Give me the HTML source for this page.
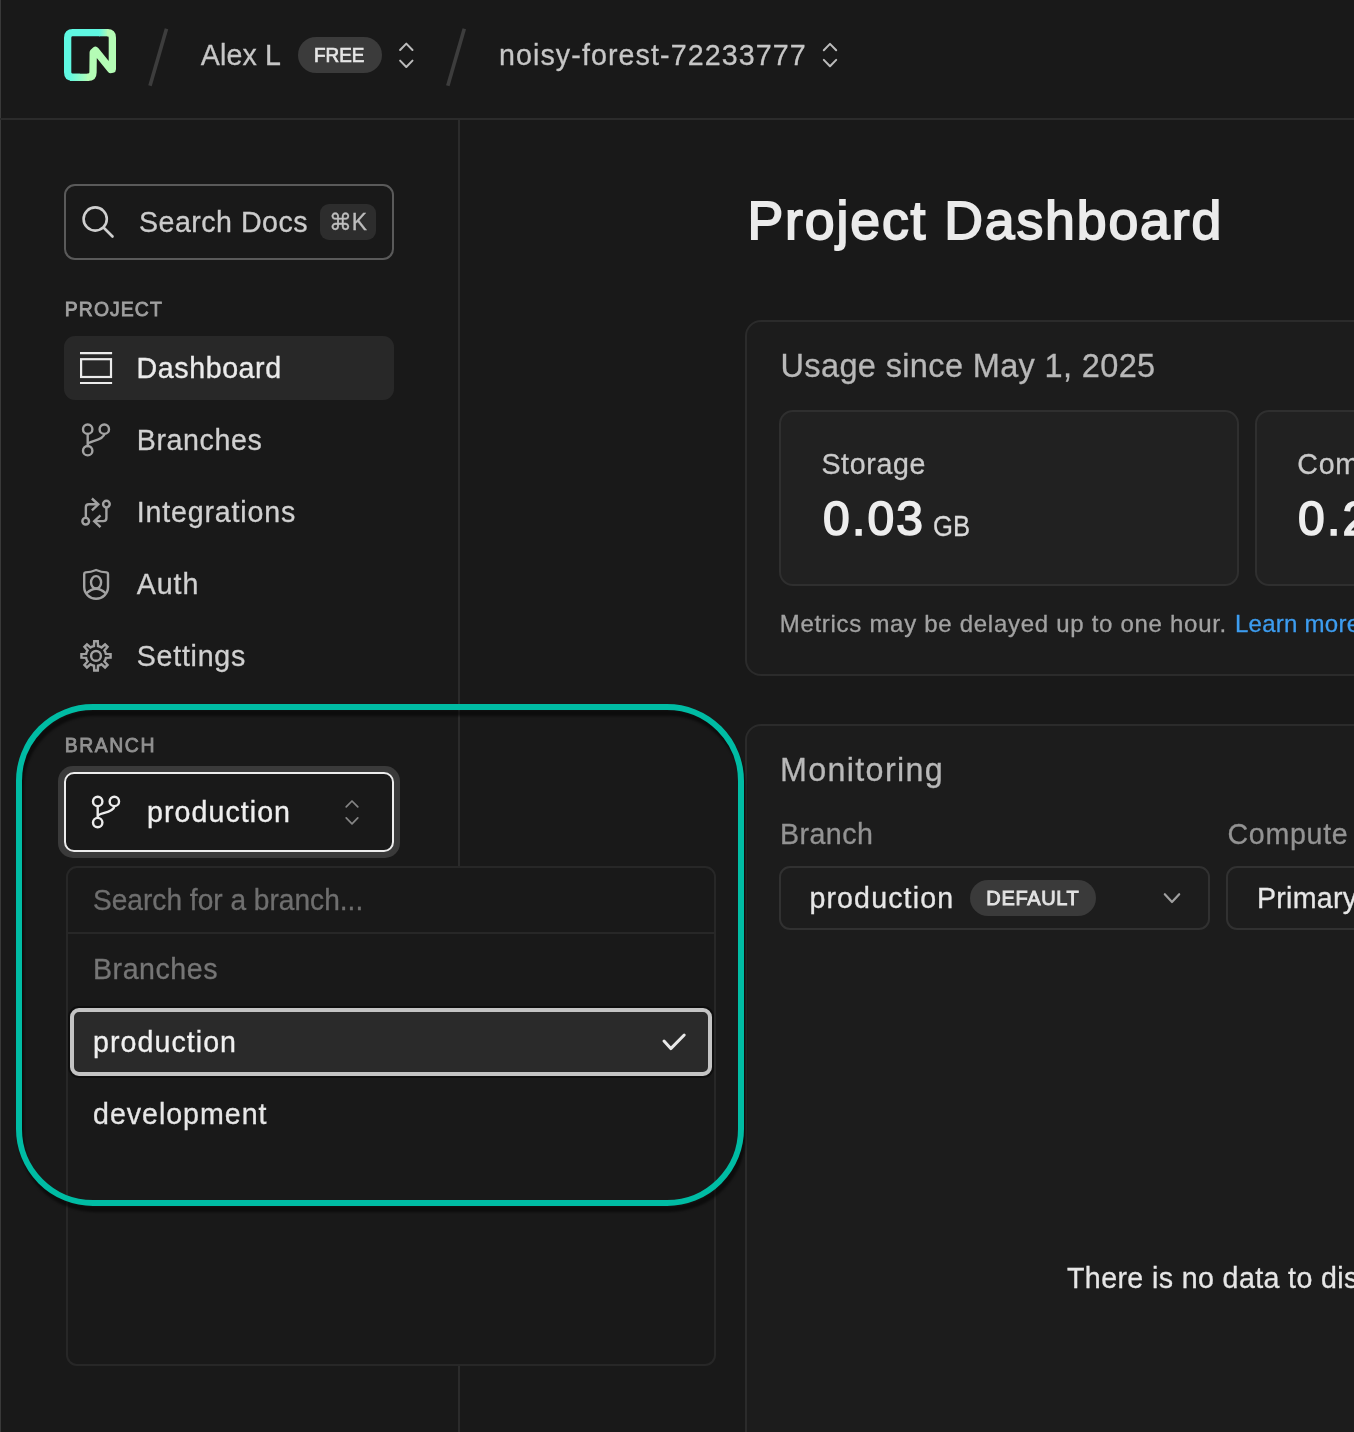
<!DOCTYPE html>
<html lang="en"><head><meta charset="utf-8"><title>Project Dashboard - Neon Console</title>
<style>
html,body{margin:0;padding:0;background:#191919;}
body{width:1354px;height:1432px;position:relative;overflow:hidden;font-family:"Liberation Sans","DejaVu Sans",sans-serif;}
.t{position:absolute;white-space:nowrap;line-height:1;-webkit-text-stroke:0.3px currentColor;}
.b{position:absolute;box-sizing:border-box;}
svg.ic{position:absolute;left:0;top:0;}
</style></head><body>
<!-- frame lines -->
<div class="b" style="left:0;top:0;width:1px;height:1432px;background:#393939"></div>
<div class="b" style="left:0;top:118px;width:1354px;height:2px;background:#2b2b2b"></div>
<div class="b" style="left:458px;top:120px;width:2px;height:1312px;background:#2b2b2b"></div>
<!-- header badge -->
<div class="b" style="left:297.6px;top:37px;width:84.6px;height:36px;border-radius:18px;background:#3b3b3b"></div>
<!-- search docs -->
<div class="b" style="left:64px;top:184px;width:330px;height:76px;border:2px solid #5a5a5a;border-radius:11px;"></div>
<div class="b" style="left:320px;top:204px;width:56px;height:36px;border-radius:9px;background:#2d2d2d"></div>
<!-- nav active -->
<div class="b" style="left:64px;top:336px;width:330px;height:64px;border-radius:11px;background:#282828"></div>
<!-- main cards -->
<div class="b" style="left:745px;top:320px;width:700px;height:356px;border:2px solid #2b2b2b;border-radius:16px;background:#1c1c1c"></div>
<div class="b" style="left:779px;top:410px;width:460px;height:176px;border:2px solid #2f2f2f;border-radius:14px;background:#212121"></div>
<div class="b" style="left:1255px;top:410px;width:460px;height:176px;border:2px solid #2f2f2f;border-radius:14px;background:#212121"></div>
<div class="b" style="left:745px;top:724px;width:700px;height:800px;border:2px solid #2b2b2b;border-radius:16px;background:#1c1c1c"></div>
<div class="b" style="left:779px;top:866px;width:431px;height:64px;border:2px solid #313131;border-radius:11px;background:#1d1d1d"></div>
<div class="b" style="left:1226px;top:866px;width:431px;height:64px;border:2px solid #313131;border-radius:11px;background:#1d1d1d"></div>
<div class="b" style="left:970.4px;top:880px;width:125.6px;height:35.6px;border-radius:18px;background:#3a3a3a"></div>
<!-- branch dropdown panel -->
<div class="b" style="left:66px;top:866px;width:650px;height:500px;border:2px solid #272727;border-radius:11px;background:#191919"></div>
<div class="b" style="left:68px;top:932px;width:646px;height:2px;background:#272727"></div>
<div class="b" style="left:68.4px;top:1006px;width:645.4px;height:72px;border-radius:11px;background:#0e0e0e"></div>
<div class="b" style="left:70.3px;top:1008px;width:641.8px;height:68px;border:4px solid #c4c4c4;border-radius:9px;background:#2a2a2a"></div>
<!-- branch select button -->
<div class="b" style="left:58px;top:766px;width:342px;height:92px;border-radius:15px;background:#3a3a3a"></div>
<div class="b" style="left:63.8px;top:772.2px;width:330.6px;height:79.8px;border:2.4px solid #ececec;border-radius:10px;background:#191919"></div>
<!-- teal highlight -->
<div class="b" style="left:16px;top:704px;width:728px;height:501.5px;border:6px solid #00bca4;border-radius:77px;filter:drop-shadow(2px 6px 1px rgba(0,0,0,.52));"></div>
<svg class="ic" width="1354" height="1432" viewBox="0 0 1354 1432">
<defs>
<linearGradient id="lgb" x1="69" y1="0" x2="89" y2="0" gradientUnits="userSpaceOnUse"><stop offset="0" stop-color="#5ff8e2"/><stop offset="1" stop-color="#b4fcb5"/></linearGradient>
<linearGradient id="lgt" x1="99" y1="0" x2="108.5" y2="0" gradientUnits="userSpaceOnUse"><stop offset="0" stop-color="#5ff8e2"/><stop offset="1" stop-color="#b4fcb5"/></linearGradient>
</defs>
<g fill="none" stroke-width="7.3" stroke-linecap="butt" stroke-linejoin="round">
<path d="M80 77.35 L72.65 77.35 Q67.65 77.35 67.65 72.35 L67.65 37.65 Q67.65 32.65 72.65 32.65 L100 32.65" stroke="#5ff8e2"/>
<path d="M99 32.65 L108.5 32.65" stroke="url(#lgt)"/>
<path d="M70 77.35 L89 77.35" stroke="url(#lgb)"/>
<path d="M107 32.65 L107.35 32.65 Q112.35 32.65 112.35 37.65 L112.35 69.2 L110.9 69.6 L95.4 50.4 L93.2 52.5 L93 72.35 Q93 77.35 88 77.35 L87 77.35" stroke="#b4fcb5"/>
</g>
<path d="M166.5 28.8 L150 85.8" stroke="#3d3d3d" stroke-width="3.6" stroke-linecap="butt"/>
<path d="M464.3 28.8 L447.8 85.8" stroke="#3d3d3d" stroke-width="3.6" stroke-linecap="butt"/>
<path d="M400.1 50.0 L406.3 43.6 L412.5 50.0" stroke="#bcbcbc" stroke-width="2" fill="none" stroke-linecap="round" stroke-linejoin="round"/><path d="M400.1 60.6 L406.3 67.0 L412.5 60.6" stroke="#bcbcbc" stroke-width="2" fill="none" stroke-linecap="round" stroke-linejoin="round"/>
<path d="M823.8 50.3 L830 43.9 L836.2 50.3" stroke="#bcbcbc" stroke-width="2" fill="none" stroke-linecap="round" stroke-linejoin="round"/><path d="M823.8 59.9 L830 66.3 L836.2 59.9" stroke="#bcbcbc" stroke-width="2" fill="none" stroke-linecap="round" stroke-linejoin="round"/>
<g fill="none" stroke="#cfcfcf" stroke-width="2.6" stroke-linecap="round"><circle cx="95.2" cy="219" r="11.6"/><path d="M104 228 L112.5 236.5"/></g>
<g fill="none" stroke="#ececec" stroke-width="2.2"><path d="M80 353.1 H112.1"/><rect x="81.1" y="359.2" width="29.9" height="17.8"/><path d="M80 383 H112.1"/></g>
<g fill="none" stroke="#a2a2a2" stroke-width="2.4" stroke-linecap="round"><circle cx="87.7" cy="429.2" r="4.7"/><circle cx="104.3" cy="429.2" r="4.7"/><circle cx="87.7" cy="450.7" r="4.7"/><path d="M87.7 433.9 L87.7 446.0"/><path d="M88.20 443.50 C90.00 441.20 103.80 440.00 104.30 434.10"/></g>
<g fill="none" stroke="#a2a2a2" stroke-width="2.4" stroke-linecap="butt" stroke-linejoin="miter">
<circle cx="106.4" cy="504.1" r="3.35"/><circle cx="85.7" cy="521.2" r="3.35"/>
<path d="M85.85 517.6 V507.3 Q85.85 504.2 88.95 504.2 H97.6"/><path d="M91.9 498.5 L98.3 504.3 L91.9 510.4"/>
<path d="M106.4 507.7 V518 Q106.4 521.1 103.3 521.1 H94.9"/><path d="M100.5 515.3 L94.2 521.2 L100.5 527.2"/>
</g>
<g fill="none" stroke="#a2a2a2" stroke-width="2.4" stroke-linecap="round" stroke-linejoin="round">
<path d="M96.1 570 C92 571.7 88 572.3 85.6 572.4 Q84.2 572.5 84.2 573.9 V587 A11.9 11.7 0 0 0 108 587 V573.9 Q108 572.5 106.6 572.4 C104.2 572.3 100.2 571.7 96.1 570 Z"/>
<ellipse cx="96.05" cy="582.3" rx="5.05" ry="6.2"/>
<path d="M86.9 592.9 Q96.1 584.5 105.3 592.9"/>
</g>
<g fill="none" stroke="#a2a2a2" stroke-width="2.4" stroke-linejoin="miter"><path d="M93.99 646.00 L94.21 641.31 L97.79 641.31 L98.01 646.00 A10.1 10.1 0 0 1 101.58 647.48 L105.05 644.32 L107.58 646.85 L104.42 650.32 A10.1 10.1 0 0 1 105.90 653.89 L110.59 654.11 L110.59 657.69 L105.90 657.91 A10.1 10.1 0 0 1 104.42 661.48 L107.58 664.95 L105.05 667.48 L101.58 664.32 A10.1 10.1 0 0 1 98.01 665.80 L97.79 670.49 L94.21 670.49 L93.99 665.80 A10.1 10.1 0 0 1 90.42 664.32 L86.95 667.48 L84.42 664.95 L87.58 661.48 A10.1 10.1 0 0 1 86.10 657.91 L81.41 657.69 L81.41 654.11 L86.10 653.89 A10.1 10.1 0 0 1 87.58 650.32 L84.42 646.85 L86.95 644.32 L90.42 647.48 A10.1 10.1 0 0 1 93.99 646.00 Z"/><circle cx="96" cy="655.9" r="4.9"/></g>
<g fill="none" stroke="#ececec" stroke-width="2.4" stroke-linecap="round"><circle cx="97.7" cy="801.4" r="4.7"/><circle cx="114.35" cy="801.4" r="4.7"/><circle cx="97.7" cy="822.6" r="4.7"/><path d="M97.7 806.1 L97.7 817.9"/><path d="M98.20 815.40 C100.00 813.10 113.85 812.20 114.35 806.30"/></g>
<path d="M346.2 806.9 L352 801 L357.8 806.9" stroke="#858585" stroke-width="1.7" fill="none" stroke-linecap="round" stroke-linejoin="round"/><path d="M346.2 817.9 L352 823.8 L357.8 817.9" stroke="#858585" stroke-width="1.7" fill="none" stroke-linecap="round" stroke-linejoin="round"/>
<path d="M664 1041 L670.8 1048.6 L684.2 1035" fill="none" stroke="#e8e8e8" stroke-width="3" stroke-linecap="round" stroke-linejoin="round"/>
<path d="M1164.8 894.2 L1172 902 L1179.2 894.2" fill="none" stroke="#a0a0a0" stroke-width="2.2" stroke-linecap="round" stroke-linejoin="round"/>
</svg>
<div id="txt" style="position:absolute;left:0;top:0;width:1354px;height:1432px;will-change:transform;">
<span class="t" id="t_alex" style="left:200.80px;top:41.29px;font-size:28.6px;font-weight:400;color:#c6c6c6;letter-spacing:0.103px;">Alex L</span>
<span class="t" id="t_free" style="left:314.00px;top:45.20px;font-size:20.2px;font-weight:400;color:#e6e6e6;transform:scaleX(0.9360);transform-origin:0 0;-webkit-text-stroke:0.7px #e6e6e6;">FREE</span>
<span class="t" id="t_proj" style="left:499.00px;top:41.09px;font-size:28.6px;font-weight:400;color:#c6c6c6;letter-spacing:1.103px;">noisy-forest-72233777</span>
<span class="t" id="t_sdocs" style="left:139.00px;top:207.59px;font-size:28.6px;font-weight:400;color:#cccccc;letter-spacing:0.480px;">Search Docs</span>
<span class="t" id="t_cmdk" style="left:329.00px;top:210.83px;font-size:23px;font-weight:400;color:#bdbdbd;transform:scaleX(0.9910);transform-origin:0 0;">⌘K</span>
<span class="t" id="t_project" style="left:64.80px;top:299.58px;font-size:19.4px;font-weight:400;color:#a0a0a0;letter-spacing:1.083px;-webkit-text-stroke:0.8px #a0a0a0;">PROJECT</span>
<span class="t" id="t_dash" style="left:136.60px;top:353.79px;font-size:28.6px;font-weight:400;color:#ebebeb;letter-spacing:0.576px;-webkit-text-stroke:0.35px #ebebeb;">Dashboard</span>
<span class="t" id="t_branches" style="left:136.80px;top:425.79px;font-size:28.6px;font-weight:400;color:#d0d0d0;letter-spacing:0.598px;-webkit-text-stroke:0.3px #d0d0d0;">Branches</span>
<span class="t" id="t_integ" style="left:136.80px;top:497.79px;font-size:28.6px;font-weight:400;color:#d0d0d0;letter-spacing:0.825px;-webkit-text-stroke:0.3px #d0d0d0;">Integrations</span>
<span class="t" id="t_auth" style="left:136.80px;top:569.79px;font-size:28.6px;font-weight:400;color:#d0d0d0;letter-spacing:0.891px;-webkit-text-stroke:0.3px #d0d0d0;">Auth</span>
<span class="t" id="t_settings" style="left:136.80px;top:641.79px;font-size:28.6px;font-weight:400;color:#d0d0d0;letter-spacing:0.739px;-webkit-text-stroke:0.3px #d0d0d0;">Settings</span>
<span class="t" id="t_branch" style="left:64.80px;top:735.98px;font-size:19.4px;font-weight:400;color:#929292;letter-spacing:1.542px;-webkit-text-stroke:0.8px #929292;">BRANCH</span>
<span class="t" id="t_prod1" style="left:147.00px;top:798.09px;font-size:28.6px;font-weight:400;color:#eeeeee;letter-spacing:1.052px;-webkit-text-stroke:0.35px #eeeeee;">production</span>
<span class="t" id="t_searchb" style="left:93.40px;top:885.99px;font-size:28.6px;font-weight:400;color:#6f6f6f;transform:scaleX(0.9827);transform-origin:0 0;">Search for a branch...</span>
<span class="t" id="t_brlist" style="left:93.00px;top:955.29px;font-size:28.6px;font-weight:400;color:#767676;letter-spacing:0.527px;">Branches</span>
<span class="t" id="t_prod2" style="left:93.00px;top:1027.89px;font-size:28.6px;font-weight:400;color:#f0f0f0;letter-spacing:1.052px;-webkit-text-stroke:0.3px #f0f0f0;">production</span>
<span class="t" id="t_dev" style="left:93.00px;top:1099.89px;font-size:28.6px;font-weight:400;color:#e6e6e6;letter-spacing:0.977px;-webkit-text-stroke:0.3px #e6e6e6;">development</span>
<span class="t" id="t_title" style="left:747.50px;top:193.53px;font-size:53.6px;font-weight:400;color:#ebebeb;letter-spacing:1.869px;-webkit-text-stroke:1.8px #ebebeb;">Project Dashboard</span>
<span class="t" id="t_usage" style="left:780.50px;top:349.79px;font-size:32.5px;font-weight:400;color:#b8b8b8;letter-spacing:0.361px;">Usage since May 1, 2025</span>
<span class="t" id="t_storage" style="left:821.40px;top:449.69px;font-size:28.6px;font-weight:400;color:#cacaca;letter-spacing:0.641px;">Storage</span>
<span class="t" id="t_003" style="left:823.00px;top:495.37px;font-size:48px;font-weight:400;color:#eeeeee;letter-spacing:2.193px;-webkit-text-stroke:1.6px #eeeeee;">0.03</span>
<span class="t" id="t_gb" style="left:932.60px;top:512.49px;font-size:28.6px;font-weight:400;color:#dadada;transform:scaleX(0.8953);transform-origin:0 0;">GB</span>
<span class="t" id="t_com" style="left:1297.30px;top:449.69px;font-size:28.6px;font-weight:400;color:#cacaca;letter-spacing:0.745px;">Compute</span>
<span class="t" id="t_02" style="left:1298.00px;top:495.37px;font-size:48px;font-weight:400;color:#eeeeee;letter-spacing:2.193px;-webkit-text-stroke:1.6px #eeeeee;">0.24</span>
<span class="t" id="t_metrics" style="left:779.70px;top:611.58px;font-size:24px;font-weight:400;color:#a2a2a2;letter-spacing:0.712px;">Metrics may be delayed up to one hour.</span>
<span class="t" id="t_learn" style="left:1235.00px;top:611.58px;font-size:24px;font-weight:400;color:#3d9df0;letter-spacing:0.252px;">Learn more</span>
<span class="t" id="t_monitoring" style="left:780.00px;top:753.76px;font-size:32.3px;font-weight:400;color:#b8b8b8;letter-spacing:1.323px;">Monitoring</span>
<span class="t" id="t_mbranch" style="left:780.00px;top:819.89px;font-size:28.6px;font-weight:400;color:#939393;letter-spacing:0.458px;">Branch</span>
<span class="t" id="t_mcompute" style="left:1227.50px;top:819.89px;font-size:28.6px;font-weight:400;color:#939393;letter-spacing:0.695px;">Compute</span>
<span class="t" id="t_mprod" style="left:809.40px;top:884.09px;font-size:28.6px;font-weight:400;color:#e6e6e6;letter-spacing:1.130px;">production</span>
<span class="t" id="t_default" style="left:986.30px;top:887.67px;font-size:20px;font-weight:400;color:#e2e2e2;letter-spacing:0.659px;-webkit-text-stroke:0.9px #e2e2e2;">DEFAULT</span>
<span class="t" id="t_primary" style="left:1257.00px;top:884.09px;font-size:28.6px;font-weight:400;color:#e6e6e6;letter-spacing:0.250px;">Primary</span>
<span class="t" id="t_nodata" style="left:1067.00px;top:1264.49px;font-size:28.6px;font-weight:400;color:#e6e6e6;letter-spacing:0.385px;">There is no data to display</span>
</div>
</body></html>
